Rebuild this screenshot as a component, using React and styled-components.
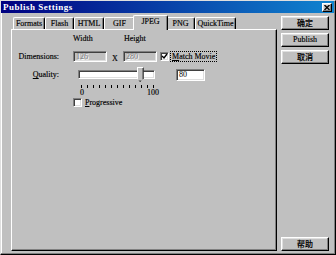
import styled, { createGlobalStyle, css } from "styled-components";

const Global = createGlobalStyle`
  html, body { margin: 0; padding: 0; background: #c0c0c0; }
  body { width: 336px; height: 255px; overflow: hidden; }
  * { box-sizing: border-box; }
`;

const serif = `"Liberation Serif", "Noto Sans CJK SC", serif`;
const cjk = `"Noto Sans CJK SC", "Liberation Sans", sans-serif`;

const raised = css`
  border: 1px solid;
  border-color: #ffffff #000000 #000000 #ffffff;
  box-shadow: inset -1px -1px 0 #808080, inset 1px 1px 0 #dfdfdf;
`;

const sunken = css`
  border: 1px solid;
  border-color: #808080 #ffffff #ffffff #808080;
  box-shadow: inset 1px 1px 0 #404040, inset -1px -1px 0 #dfdfdf;
`;

const Window = styled.div`
  width: 336px;
  height: 255px;
  background: #c0c0c0;
  border: 1px solid;
  border-color: #dfdfdf #000000 #000000 #dfdfdf;
  box-shadow: inset -1px -1px 0 #808080, inset 1px 1px 0 #ffffff;
  padding: 0 1px 2px 0;
  display: flex;
  flex-direction: column;
  font-family: ${serif};
  font-size: 8px;
  color: #000;
  -webkit-text-stroke: 0.15px #000;
`;

const TitleBar = styled.div`
  height: 12px;
  background: linear-gradient(to right, #000080, #1084d0);
  display: flex;
  align-items: center;
  justify-content: space-between;
  padding: 0 2px 0 2px;
`;

const Title = styled.span`
  color: #fff;
  -webkit-text-stroke: 0;
  font-weight: bold;
  font-size: 9px;
  letter-spacing: 0.5px;
  line-height: 12px;
`;

const CloseBox = styled.div`
  width: 10px;
  height: 9px;
  ${raised};
  background: #c0c0c0;
  display: flex;
  align-items: center;
  justify-content: center;
`;

const Body = styled.div`
  flex: 1;
  display: flex;
  padding: 2px 5px 0 10px;
`;

const TabArea = styled.div`
  width: 267px;
  display: flex;
  flex-direction: column;
`;

const TabStrip = styled.div`
  display: flex;
  align-items: flex-end;
  height: 14px;
  padding-left: 2px;
  position: relative;
  z-index: 1;
`;

const Tab = styled.div`
  width: ${(p) => p.$w}px;
  height: 12px;
  background: #c0c0c0;
  border-top: 1px solid #ffffff;
  border-left: 1px solid #ffffff;
  border-right: 1px solid #000000;
  box-shadow: inset -1px 0 0 #808080;
  border-radius: 2px 2px 0 0;
  display: flex;
  align-items: center;
  justify-content: center;
  line-height: 10px;
  ${(p) =>
    p.$active &&
    css`
      height: 15px;
      margin: 0 -2px -1px;
      width: ${p.$w + 4}px;
      position: relative;
      padding-bottom: 2px;
    `}
`;

const Panel = styled.div`
  height: 222px;
  background: #c0c0c0;
  border: 1px solid;
  border-color: #ffffff #000000 #000000 #ffffff;
  box-shadow: inset -1px -1px 0 #808080;
  display: flex;
  flex-direction: column;
  padding-top: 4px;
`;

const HeaderRow = styled.div`
  display: flex;
  height: 9px;
  line-height: 9px;
  padding-left: 61px;
`;

const HeaderCell = styled.span`
  width: ${(p) => p.$w}px;
  padding-left: ${(p) => p.$pad || 0}px;
`;

const Row = styled.div`
  display: flex;
  align-items: center;
  height: ${(p) => p.$h}px;
  margin-top: ${(p) => p.$mt}px;
`;

const Label = styled.span`
  width: 47px;
  text-align: right;
  margin-right: 14px;
  line-height: 9px;
`;

const TextBox = styled.div`
  width: ${(p) => p.$w}px;
  height: ${(p) => p.$h || 11}px;
  ${sunken};
  background: ${(p) => (p.$disabled ? "#c0c0c0" : "#ffffff")};
  color: ${(p) => (p.$disabled ? "#808080" : "#000")};
  -webkit-text-stroke: 0;
  text-shadow: ${(p) => (p.$disabled ? "1px 1px 0 #fff" : "none")};
  padding-left: 2px;
  line-height: ${(p) => (p.$h || 11) - 2}px;
  margin-left: ${(p) => p.$ml || 0}px;
`;

const Times = styled.span`
  width: 16px;
  text-align: center;
  padding-top: 3px;
`;

const Check = styled.div`
  width: 9px;
  height: 9px;
  ${sunken};
  background: #fff;
  margin-left: ${(p) => p.$ml || 0}px;
  display: flex;
  align-items: center;
  justify-content: center;
  flex-shrink: 0;
`;

const CheckText = styled.span`
  margin-left: 2px;
  line-height: 9px;
  padding: 0 1px;
  outline: ${(p) => (p.$focus ? "1px dotted #000" : "none")};
`;

const SliderBox = styled.div`
  position: relative;
  width: 87px;
  height: 13px;
  padding: 2px 5px 0 5px;
`;

const Track = styled.div`
  height: 9px;
  ${sunken};
  background: #fff;
`;

const Thumb = styled.div`
  position: absolute;
  top: -1px;
  width: 7px;
  height: 15px;
  background: #c0c0c0;
  border: 1px solid;
  border-color: #ffffff #000000 #000000 #ffffff;
  box-shadow: inset -1px -1px 0 #808080;
  clip-path: polygon(0 0, 100% 0, 100% 75%, 50% 100%, 0 75%);
`;

const Ticks = styled.div`
  display: flex;
  justify-content: space-between;
  width: 73px;
  margin: 4px 0 0 69px;
  height: 3px;
`;

const TickMark = styled.i`
  width: 1px;
  height: 3px;
  background: #000;
`;

const Scale = styled.div`
  display: flex;
  justify-content: space-between;
  width: 79px;
  margin: 1px 0 0 68px;
  line-height: 8px;
`;

const Side = styled.div`
  width: 48px;
  margin-left: 4px;
  display: flex;
  flex-direction: column;
  padding-top: 1px;
  gap: 3px;
`;

const Button = styled.div`
  height: 14px;
  ${raised};
  background: #c0c0c0;
  display: flex;
  align-items: center;
  justify-content: center;
  font-family: ${(p) => (p.$cjk ? cjk : serif)};
  font-size: 8px;
  font-weight: ${(p) => (p.$cjk ? 500 : "normal")};
  line-height: 10px;
  margin-top: ${(p) => (p.$bottom ? "auto" : "0")};
  margin-bottom: ${(p) => (p.$bottom ? "1px" : "0")};
`;

const tabs = [
  ["Formats", 32],
  ["Flash", 29],
  ["HTML", 30],
  ["GIF", 31],
  ["JPEG", 31],
  ["PNG", 29],
  ["QuickTime", 41],
];

const CheckMark = () => (
  <svg width="7" height="7" viewBox="0 0 7 7">
    <path d="M1 3 L3 5 L6 1" stroke="#000" strokeWidth="1.4" fill="none" />
  </svg>
);

export default function App() {
  return (
    <>
      <Global />
      <Window>
        <TitleBar>
          <Title>Publish Settings</Title>
          <CloseBox>
            <svg width="6" height="5" viewBox="0 0 6 5">
              <path d="M0.5 0 L5.5 5 M5.5 0 L0.5 5" stroke="#000" strokeWidth="1.3" />
            </svg>
          </CloseBox>
        </TitleBar>
        <Body>
          <TabArea>
            <TabStrip>
              {tabs.map(([name, w]) => (
                <Tab key={name} $w={w} $active={name === "JPEG"}>
                  {name}
                </Tab>
              ))}
            </TabStrip>
            <Panel>
              <HeaderRow>
                <HeaderCell $w={49}>Width</HeaderCell>
                <HeaderCell $w={40} $pad={2}>Height</HeaderCell>
              </HeaderRow>
              <Row $h={11} $mt={8}>
                <Label>Dimensions:</Label>
                <TextBox $w={34} $disabled>126</TextBox>
                <Times>X</Times>
                <TextBox $w={34} $disabled>280</TextBox>
                <Check $ml={3}>
                  <CheckMark />
                </Check>
                <CheckText $focus>
                  <u>M</u>atch Movie
                </CheckText>
              </Row>
              <Row $h={13} $mt={6}>
                <Label>
                  <u>Q</u>uality:
                </Label>
                <SliderBox>
                  <Track />
                  <Thumb style={{ left: `${5 + 0.8 * 77 - 3}px` }} />
                </SliderBox>
                <TextBox $w={29} $h={12} $ml={16}>80</TextBox>
              </Row>
              <Ticks>
                {Array.from({ length: 13 }).map((_, i) => (
                  <TickMark key={i} />
                ))}
              </Ticks>
              <Scale>
                <span>0</span>
                <span>100</span>
              </Scale>
              <Row $h={9} $mt={1}>
                <Check $ml={61} />
                <CheckText>
                  <u>P</u>rogressive
                </CheckText>
              </Row>
            </Panel>
          </TabArea>
          <Side>
            <Button $cjk>确定</Button>
            <Button>Publish</Button>
            <Button $cjk>取消</Button>
            <Button $cjk $bottom>帮助</Button>
          </Side>
        </Body>
      </Window>
    </>
  );
}
